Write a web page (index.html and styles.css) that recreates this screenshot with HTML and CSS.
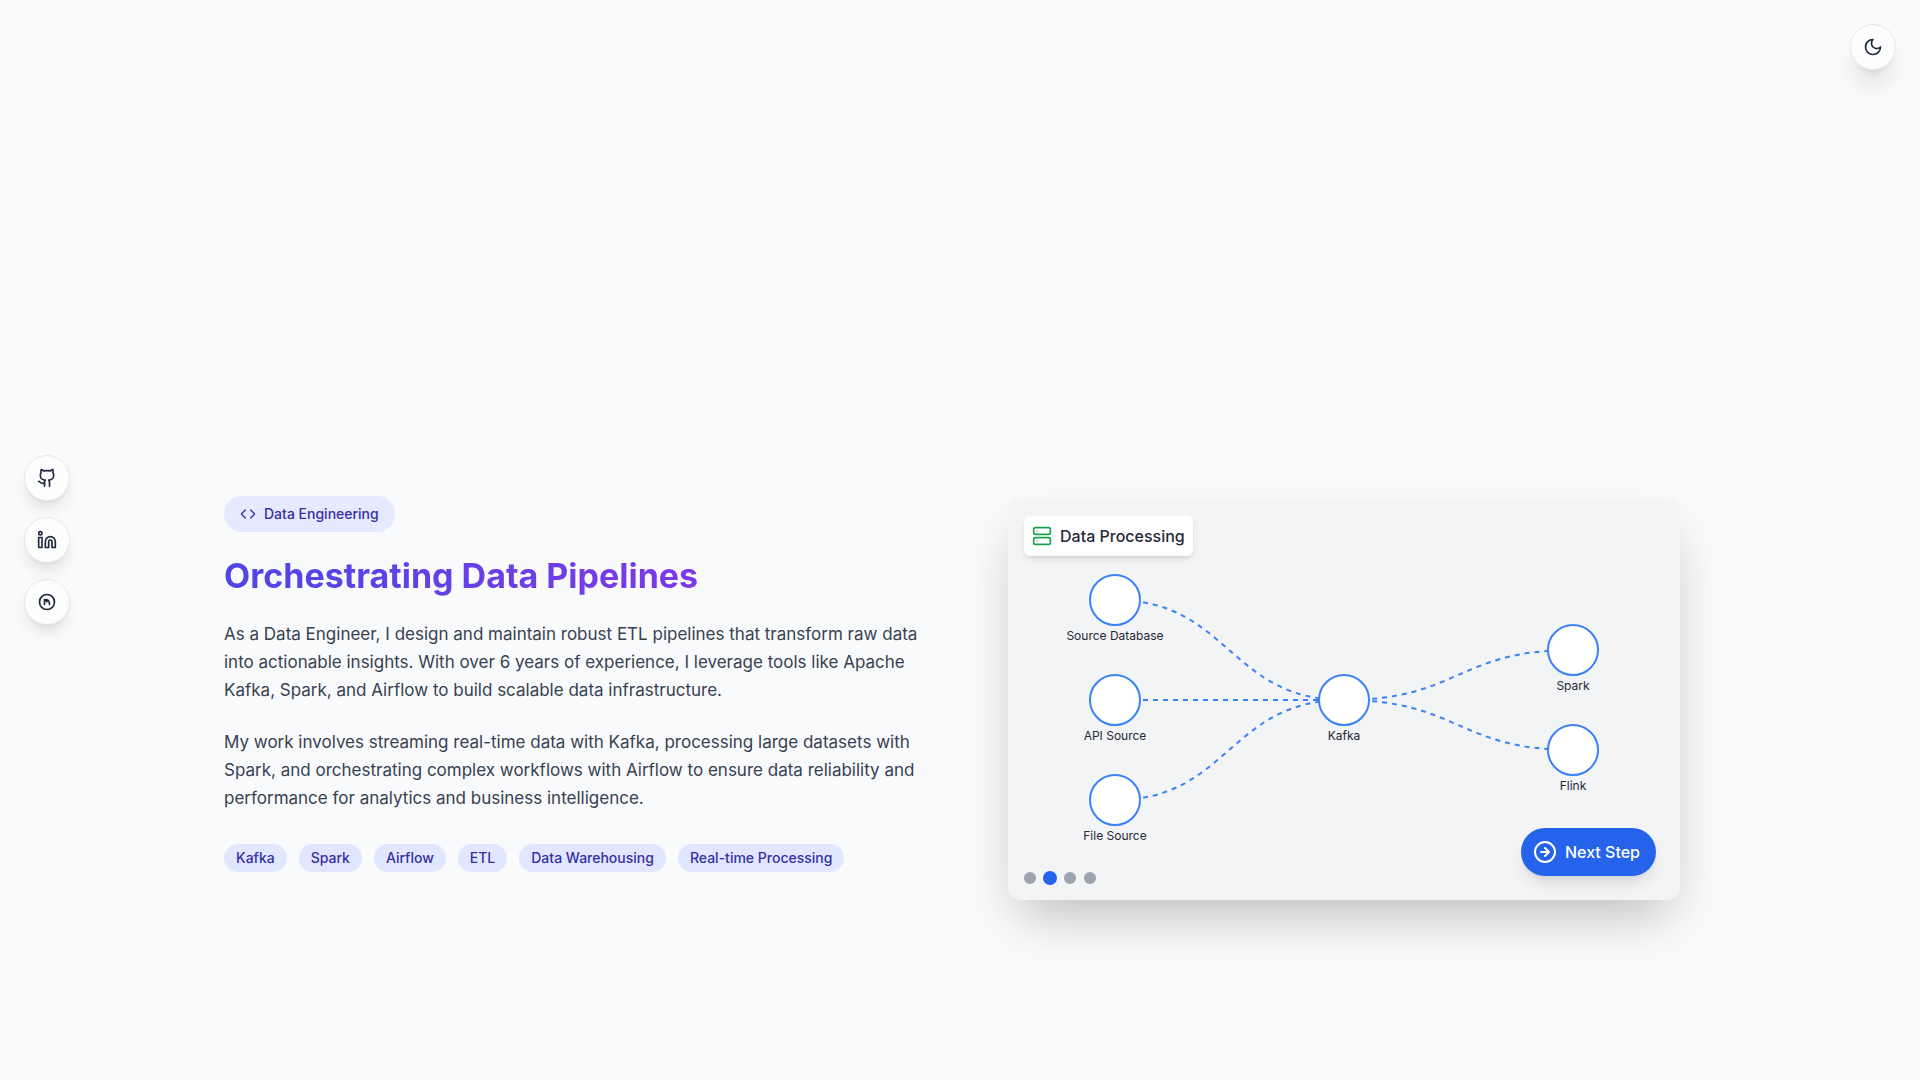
FILE: index.html
```html
<!DOCTYPE html>
<html lang="en">
<head>
<meta charset="utf-8">
<title>Orchestrating Data Pipelines</title>
<link rel="stylesheet" href="styles.css">
</head>
<body>
<button class="round-button theme-toggle" type="button" aria-label="Toggle dark mode">
  <svg class="icon" viewBox="0 0 24 24"><path d="M12 3a6 6 0 0 0 9 9 9 9 0 1 1-9-9Z"/></svg>
</button>
<nav class="social" aria-label="Social links">
  <a class="round-button" href="#" aria-label="GitHub">
    <svg class="icon" viewBox="0 0 24 24"><path d="M15 22v-4a4.8 4.8 0 0 0-1-3.500c3 0 6-2 6-5.500.080-1.250-.270-2.480-1-3.500.280-1.150.280-2.350 0-3.500 0 0-1 0-3 1.500-2.640-.500-5.360-.500-8 0C6 2 5 2 5 2c-.300 1.150-.300 2.350 0 3.500A5.400 5.400 0 0 0 4 9c0 3.500 3 5.500 6 5.500-.390.490-.680 1.050-.850 1.650-.170.600-.220 1.230-.150 1.850v4"/><path d="M9 18c-4.510 2-5-2-7-2"/></svg>
  </a>
  <a class="round-button" href="#" aria-label="LinkedIn">
    <svg class="icon" viewBox="0 0 24 24"><path d="M16 8a6 6 0 0 1 6 6v7h-4v-7a2 2 0 0 0-4 0v7h-4v-7a6 6 0 0 1 6-6z"/><rect x="2" y="9" width="4" height="12"/><circle cx="4" cy="4" r="2"/></svg>
  </a>
  <a class="round-button" href="#" aria-label="Portfolio">
    <svg class="icon" viewBox="0 0 24 24"><circle cx="12" cy="12" r="9"/><path d="M9 15V9l3 2.500M11 9c2.600.4 4 2.400 4 6"/></svg>
  </a>
</nav>
<main class="section">
  <article class="story">
    <p class="badge"><svg class="badge-icon" viewBox="0 0 24 24"><path d="m16 18 6-6-6-6M8 6l-6 6 6 6"/></svg>Data Engineering</p>
    <h1 class="title">Orchestrating Data Pipelines</h1>
    <p class="text">As a Data Engineer, I design and maintain robust ETL pipelines that transform raw data into actionable insights. With over 6 years of experience, I leverage tools like Apache Kafka, Spark, and Airflow to build scalable data infrastructure.</p>
    <p class="text">My work involves streaming real-time data with Kafka, processing large datasets with Spark, and orchestrating complex workflows with Airflow to ensure data reliability and performance for analytics and business intelligence.</p>
    <ul class="tags">
      <li class="tag">Kafka</li>
      <li class="tag">Spark</li>
      <li class="tag">Airflow</li>
      <li class="tag">ETL</li>
      <li class="tag">Data Warehousing</li>
      <li class="tag">Real-time Processing</li>
    </ul>
  </article>
  <div class="demo">
    <section class="card">
      <svg class="diagram" viewBox="0 0 672 400" role="img" aria-label="Data pipeline">
        <g class="edges">
          <path d="M107 100C221 100 221 200 336 200"/>
          <path d="M107 200H336"/>
          <path d="M107 300C221 300 221 200 336 200"/>
          <path d="M336 200C450 200 450 150 565 150"/>
          <path d="M336 200C450 200 450 250 565 250"/>
        </g>
        <g class="nodes">
          <circle cx="107" cy="100" r="25"/><circle cx="107" cy="200" r="25"/><circle cx="107" cy="300" r="25"/>
          <circle cx="336" cy="200" r="25"/><circle cx="565" cy="150" r="25"/><circle cx="565" cy="250" r="25"/>
        </g>
        <g class="labels">
          <text x="107" y="140">Source Database</text><text x="107" y="240">API Source</text><text x="107" y="340">File Source</text>
          <text x="336" y="240">Kafka</text><text x="565" y="190">Spark</text><text x="565" y="290">Flink</text>
        </g>
      </svg>
      <header class="stage"><svg class="stage-icon" viewBox="0 0 24 24"><rect x="2" y="2" width="20" height="8" rx="2"/><rect x="2" y="14" width="20" height="8" rx="2"/><path class="stage-lights" d="M6 6h.01M6 18h.01"/></svg>Data Processing</header>
      <footer class="controls">
        <div class="dots">
          <button class="dot" type="button" aria-label="Step 1"></button>
          <button class="dot active" type="button" aria-label="Step 2"></button>
          <button class="dot" type="button" aria-label="Step 3"></button>
          <button class="dot" type="button" aria-label="Step 4"></button>
        </div>
        <button class="next" type="button"><svg class="next-icon" viewBox="0 0 24 24"><circle cx="12" cy="12" r="10"/><path d="M8 12h8M12 16l4-4-4-4"/></svg>Next Step</button>
      </footer>
    </section>
  </div>
</main>
</body>
</html>
```
FILE: styles.css
```css
* { box-sizing: border-box; margin: 0; padding: 0; }
body {
  background: #f9fafc;
  color: #1f2937;
  font-family: Inter, "Liberation Sans", sans-serif;
  font-size: 16px;
  line-height: 24px;
}
button { border: 0; font: inherit; cursor: pointer; }
svg { fill: none; stroke: currentColor; stroke-width: 2; stroke-linecap: round; stroke-linejoin: round; flex: none; }

.round-button {
  display: flex;
  padding: 12px;
  border: 1px solid #e5e7eb;
  border-radius: 50%;
  background: #fdfdfe;
  color: #1e293b;
  box-shadow: 0 10px 15px -3px rgb(0 0 0 / 10%), 0 4px 6px -4px rgb(0 0 0 / 10%);
}
.icon { width: 20px; height: 20px; }
.theme-toggle {
  position: fixed;
  top: 24px;
  right: 24px;
  box-shadow: 0 20px 25px -5px rgb(0 0 0 / 10%), 0 8px 10px -6px rgb(0 0 0 / 10%);
}
.social {
  position: fixed;
  left: 24px;
  top: 0;
  bottom: 0;
  display: flex;
  flex-direction: column;
  justify-content: center;
  gap: 16px;
}

.section {
  display: grid;
  grid-template-columns: 1fr 1fr;
  align-items: center;
  max-width: 1536px;
  min-height: 100vh;
  margin: 0 auto;
  padding-top: 320px;
}
.story { padding: 0 32px 32px; }
.badge {
  display: inline-flex;
  align-items: center;
  gap: 8px;
  padding: 8px 16px;
  border-radius: 18px;
  background: #e5eafe;
  color: #3730a3;
  font-size: 14px;
  font-weight: 500;
  line-height: 20px;
  vertical-align: top;
}
.badge-icon { width: 16px; height: 16px; }
.title {
  margin: 24px 0;
  background: linear-gradient(to right, #4f46e5, #9333ea);
  background-clip: text;
  color: transparent;
  font-size: 34px;
  font-weight: 700;
  line-height: 40px;
}
.text { margin-bottom: 24px; color: #374151; font-size: 17px; line-height: 28px; }
.tags { display: flex; flex-wrap: wrap; gap: 12px; padding-top: 8px; list-style: none; }
.tag {
  padding: 4px 12px;
  border-radius: 14px;
  background: #e0e7ff;
  color: #3730a3;
  font-size: 14px;
  font-weight: 500;
  line-height: 20px;
}

.demo { padding: 0 48px; }
.card {
  position: relative;
  display: flex;
  flex-direction: column;
  justify-content: space-between;
  align-items: flex-start;
  min-height: 400px;
  padding: 16px;
  border-radius: 12px;
  background: #f3f4f6;
  box-shadow: 0 25px 50px -12px rgb(0 0 0 / 25%);
}
.diagram { position: absolute; inset: 0; width: 100%; height: 100%; }
.edges { stroke: #3b82f6; stroke-width: 2; stroke-dasharray: 5 5; stroke-dashoffset: 2; stroke-linecap: butt; }
.nodes { fill: #fff; stroke: #3b82f6; }
.labels { fill: #1f2937; stroke: none; font-size: 12px; text-anchor: middle; }
.stage {
  position: relative;
  display: flex;
  align-items: center;
  gap: 8px;
  padding: 8px;
  border-radius: 6px;
  background: #fff;
  box-shadow: 0 4px 6px -1px rgb(0 0 0 / 10%), 0 2px 4px -2px rgb(0 0 0 / 10%);
  font-weight: 500;
}
.stage-icon { width: 20px; height: 20px; color: #16a34a; }
.stage-lights { stroke: #9ca3af; }
.controls {
  position: relative;
  display: flex;
  align-items: flex-end;
  justify-content: space-between;
  align-self: stretch;
}
.dots { display: flex; gap: 8px; }
.dot { width: 12px; height: 12px; border-radius: 50%; background: #9ca3af; }
.active { background: #2563eb; box-shadow: 0 0 0 1px #2563eb; }
.next {
  display: flex;
  align-items: center;
  gap: 8px;
  margin: 0 8px 8px 0;
  padding: 12px 16px 12px 12px;
  border-radius: 24px;
  background: #2563eb;
  color: #fff;
  font-weight: 500;
  box-shadow: 0 10px 15px -3px rgb(0 0 0 / 10%), 0 4px 6px -4px rgb(0 0 0 / 10%);
}
.next-icon { width: 24px; height: 24px; }
```
